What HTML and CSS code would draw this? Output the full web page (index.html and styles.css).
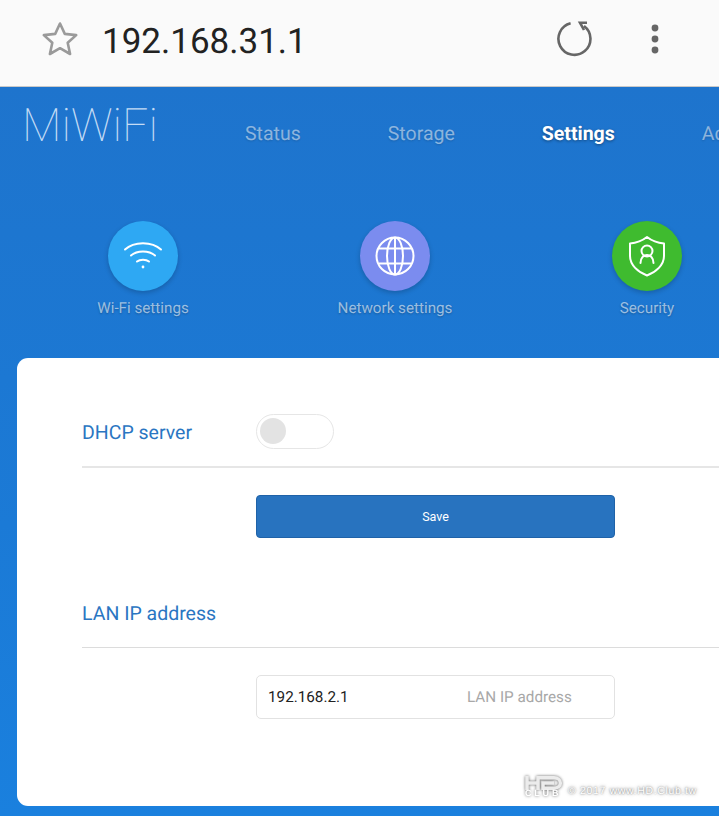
FILE: index.html
```html
<!DOCTYPE html>
<html lang="en">
<head>
<meta charset="utf-8">
<title>MiWiFi</title>
<link rel="stylesheet" href="styles.css">
</head>
<body>
<div class="page">
  <header class="browser">
    <svg class="star" width="38" height="38" viewBox="0 0 38 38"><path d="M19 3.500l4.800 10.400 11.400 1.200-8.500 7.700 2.400 11.200-10.100-5.800-10.100 5.800 2.400-11.200-8.500-7.700 11.400-1.200z" fill="none" stroke="#9a9a9a" stroke-width="2.600" stroke-linejoin="round"/></svg>
    <div class="url">192.168.31.1</div>
    <svg class="reload" width="38" height="38" viewBox="0 0 38 38"><path d="M14.600 3.300A16 16 0 1 0 28 6" fill="none" stroke="#666" stroke-width="2.600"/><path d="M31 2.700H24L28 10" fill="none" stroke="#666" stroke-width="2.600"/></svg>
    <svg class="dots" width="12" height="34" viewBox="0 0 12 34"><circle cx="6" cy="6" r="3.400" fill="#666"/><circle cx="6" cy="17" r="3.400" fill="#666"/><circle cx="6" cy="28" r="3.400" fill="#666"/></svg>
  </header>
  <main class="app">
    <nav class="topnav">
      <div class="logo">MiWiFi</div>
      <a class="nav-item">Status</a>
      <a class="nav-item">Storage</a>
      <a class="nav-item active">Settings</a>
      <a class="nav-item">Advanced</a>
    </nav>
    <section class="tiles">
      <div class="tile">
        <div class="disc disc-wifi">
          <svg width="40" height="40" viewBox="0 0 40 40" fill="none" stroke="#fff" stroke-width="2" stroke-linecap="round"><path d="M2 13.500C11 5 29 5 38 13.500"/><path d="M8 19.500C14 14 26 14 32 19.500"/><path d="M14 25.500C17 23 23 23 26 25.500"/><circle cx="20" cy="31" r="1.400" fill="#fff" stroke="none"/></svg>
        </div>
        <div class="tile-label">Wi-Fi settings</div>
      </div>
      <div class="tile">
        <div class="disc disc-net">
          <svg width="40" height="40" viewBox="0 0 40 40" fill="none" stroke="#fff" stroke-width="2"><circle cx="20" cy="20" r="18.500"/><ellipse cx="20" cy="20" rx="8" ry="18.500"/><path d="M3.500 12.500h33M3.500 27.500h33M20 1.500v37"/></svg>
        </div>
        <div class="tile-label">Network settings</div>
      </div>
      <div class="tile">
        <div class="disc disc-sec">
          <svg width="40" height="44" viewBox="0 0 40 44" fill="none" stroke="#fff" stroke-width="2" stroke-linejoin="round" stroke-linecap="round"><path d="M20 3C15 7 9 9 3 9.500V22C3 31 11 38 20 41.500C29 38 37 31 37 22V9.500C31 9 25 7 20 3Z"/><circle cx="20" cy="17" r="5.500"/><path d="M13.500 29c0-5 3-8 6.500-8s6.500 3 6.500 8"/></svg>
        </div>
        <div class="tile-label">Security</div>
      </div>
    </section>
    <section class="card">
      <div class="row row-dhcp">
        <h2 class="row-title">DHCP server</h2>
        <div class="toggle"><span class="knob"></span></div>
      </div>
      <div class="field">
        <button class="save">Save</button>
      </div>
      <div class="row row-lan">
        <h2 class="row-title">LAN IP address</h2>
      </div>
      <div class="field">
        <div class="input"><span class="value">192.168.2.1</span><span class="hint">LAN IP address</span></div>
      </div>
    </section>
    <div class="mark">
      <span class="mark-logo">
        <svg width="38" height="14" viewBox="0 0 38 14" fill="none" stroke="#ececec" stroke-width="3.500"><path d="M2 0V14M2 7H13M13 0V14"/><path d="M13 1.800H29C37.500 1.800 37.500 12.200 29 12.200H18V7H29"/></svg>
        <span class="mark-club">CLUB</span>
      </span>
      <span class="mark-text">© 2017 www.HD.Club.tw</span>
    </div>
  </main>
</div>
</body>
</html>
```
FILE: styles.css
```css
* { box-sizing: border-box; }
html, body { margin: 0; padding: 0; }
body { font-family: Roboto, "Liberation Sans", sans-serif; background: #1a7fdc; text-rendering: geometricPrecision; }
.page { width: 719px; height: 816px; overflow: hidden; display: flex; flex-direction: column; }

.browser { height: 87px; flex: none; background: #fafafa; border-bottom: 1px solid #c9c9c9; display: flex; align-items: center; padding-left: 41px; padding-bottom: 8px; }
.star { flex: none; }
.url { font-size: 35px; color: #222; margin-left: 23px; margin-top: 6px; width: 454px; flex: none; line-height: 40px; }
.reload { flex: none; }
.dots { flex: none; margin-left: 55px; }

.app { position: relative; flex: 1; min-height: 0; background: linear-gradient(180deg, #1e74cd 0%, #1b7ad6 60%, #1a80de 100%); display: flex; flex-direction: column; }

.topnav { height: 134px; flex: none; display: flex; gap: 87px; padding: 16px 0 0 22px; white-space: nowrap; overflow: hidden; }
.logo { font-weight: 100; font-size: 46px; line-height: 46px; color: #c4dcf5; width: 136px; flex: none; height: 46px; }
.nav-item { font-size: 19.500px; line-height: 32px; margin-top: 15px; color: rgba(255,255,255,.5); text-shadow: 0 1px 2px rgba(0,0,0,.15); flex: none; }
.nav-item.active { color: #fff; font-weight: 700; text-shadow: 0 1px 3px rgba(0,0,0,.4); }

.tiles { flex: none; height: 137px; display: flex; padding-left: 17px; overflow: hidden; }
.tile { width: 252px; flex: none; display: flex; flex-direction: column; align-items: center; }
.disc { width: 70px; height: 70px; border-radius: 50%; display: flex; align-items: center; justify-content: center; box-shadow: 0 2px 5px rgba(0,0,0,.2); }
.disc-wifi { background: #2ea8f3; }
.disc-net { background: #7b8cef; }
.disc-sec { background: #3fbb2f; }
.tile-label { margin-top: 7px; font-size: 15.200px; line-height: 20px; color: rgba(255,255,255,.58); text-shadow: 0 1px 2px rgba(0,0,0,.25); white-space: nowrap; }

.card { flex: none; margin-left: 17px; margin-right: -40px; height: 448px; background: #fff; border-radius: 11px; padding-left: 65px; }
.row { display: flex; align-items: center; }
.row-dhcp { height: 110px; border-bottom: 2px solid #e6e6e6; padding-top: 40px; }
.row-lan { height: 110px; border-bottom: 1px solid #dcdcdc; padding-top: 41px; }
.row-title { margin: 2px 0 0; width: 174px; flex: none; font-size: 19.500px; font-weight: 400; color: #2a76c2; line-height: 30px; white-space: nowrap; }
.toggle { width: 78px; height: 35px; border: 1.500px solid #e6e6e6; border-radius: 18px; display: flex; align-items: center; padding-left: 3px; margin-top: -2px; background: #fff; }
.knob { width: 26px; height: 26px; border-radius: 50%; background: #e3e3e3; }

.field { padding-left: 174px; padding-top: 27px; }
.save { display: block; width: 359px; height: 43px; background: #2873bf; border: 1px solid #1f62a8; border-radius: 4px; color: #fff; font: 400 12.500px Roboto, sans-serif; padding: 0; }
.input { width: 359px; height: 44px; border: 1.500px solid #e2e2e2; border-radius: 5px; display: flex; align-items: center; padding-left: 11px; font-size: 15.250px; }
.value { color: #222; width: 199px; flex: none; }
.hint { color: #a8a8a8; }

.mark { position: absolute; left: 525px; bottom: 19px; display: flex; align-items: flex-end; gap: 5px; color: #fff; text-shadow: 0 0 2px rgba(0,0,0,.55), 0 0 4px rgba(0,0,0,.3); }
.mark-logo { display: flex; flex-direction: column; width: 38px; filter: drop-shadow(0 0 1.500px rgba(0,0,0,.6)); }
.mark-logo svg { display: block; }
.mark-club { font: 700 9px/7px "Liberation Sans", sans-serif; letter-spacing: 2.800px; text-shadow: none; }
.mark-text { font: 10.500px/12px "Liberation Sans", sans-serif; letter-spacing: .65px; white-space: nowrap; }
```
